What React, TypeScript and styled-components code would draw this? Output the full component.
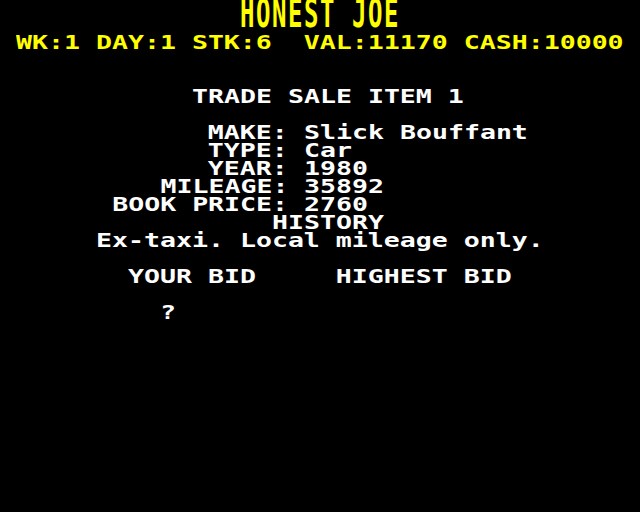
import React from "react";
import styled, { createGlobalStyle } from "styled-components";

const GlobalStyle = createGlobalStyle`
  html, body {
    margin: 0;
    padding: 0;
    background: #000000;
  }
`;

const CELL = 16;
const ROW = 18;
const SCALE_X = 16 / (0.60205 * 19.2);

const Screen = styled.div`
  width: 640px;
  height: 512px;
  background: #000000;
  display: flex;
  flex-direction: column;
  overflow: hidden;
  font-family: "DejaVu Sans Mono", "Liberation Mono", monospace;
  font-weight: bold;
`;

const Title = styled.div`
  height: 34px;
  padding-left: 240px;
  color: #ffff00;
  font-size: 24px;
  line-height: 18px;
  letter-spacing: 1.55px;
  white-space: pre;
  flex-shrink: 0;
`;

const TitleText = styled.span`
  display: inline-block;
  transform: scaleY(1.6);
  transform-origin: 0 0;
`;

const Line = styled.div<{ $col: number; $gap?: number; $yellow?: boolean }>`
  height: ${ROW}px;
  line-height: ${ROW}px;
  font-size: 19.2px;
  padding-left: ${(p) => p.$col * CELL}px;
  margin-top: ${(p) => (p.$gap ?? 0) * ROW}px;
  color: ${(p) => (p.$yellow ? "#ffff00" : "#ffffff")};
  white-space: pre;
  flex-shrink: 0;
`;

const Chars = styled.span`
  display: inline-block;
  transform: scaleX(${SCALE_X});
  transform-origin: 0 50%;
`;

const FieldList = styled.div`
  margin-top: ${ROW}px;
  display: flex;
  flex-direction: column;
  flex-shrink: 0;
`;

const FieldRow = styled.div`
  height: ${ROW}px;
  line-height: ${ROW}px;
  font-size: 19.2px;
  color: #ffffff;
  display: grid;
  grid-template-columns: ${18 * CELL}px ${CELL}px 1fr;
  white-space: pre;
`;

const Label = styled.span`
  justify-self: end;
  display: inline-block;
  transform: scaleX(${SCALE_X});
  transform-origin: 100% 50%;
`;

const Value = styled.span`
  grid-column: 3;
  justify-self: start;
  display: inline-block;
  transform: scaleX(${SCALE_X});
  transform-origin: 0 50%;
`;

const fields: [string, string][] = [
  ["MAKE:", "Slick Bouffant"],
  ["TYPE:", "Car"],
  ["YEAR:", "1980"],
  ["MILEAGE:", "35892"],
  ["BOOK PRICE:", "2760"],
];

export default function App() {
  return (
    <Screen>
      <GlobalStyle />
      <Title>
        <TitleText>HONEST JOE</TitleText>
      </Title>
      <Line $col={1} $yellow>
        <Chars>WK:1 DAY:1 STK:6  VAL:11170 CASH:10000</Chars>
      </Line>
      <Line $col={12} $gap={2}>
        <Chars>TRADE SALE ITEM 1</Chars>
      </Line>
      <FieldList>
        {fields.map(([label, value]) => (
          <FieldRow key={label}>
            <Label>{label}</Label>
            <Value>{value}</Value>
          </FieldRow>
        ))}
      </FieldList>
      <Line $col={17}>
        <Chars>HISTORY</Chars>
      </Line>
      <Line $col={6}>
        <Chars>Ex-taxi. Local mileage only.</Chars>
      </Line>
      <Line $col={8} $gap={1}>
        <Chars>YOUR BID     HIGHEST BID</Chars>
      </Line>
      <Line $col={10} $gap={1}>
        <Chars>?</Chars>
      </Line>
    </Screen>
  );
}
